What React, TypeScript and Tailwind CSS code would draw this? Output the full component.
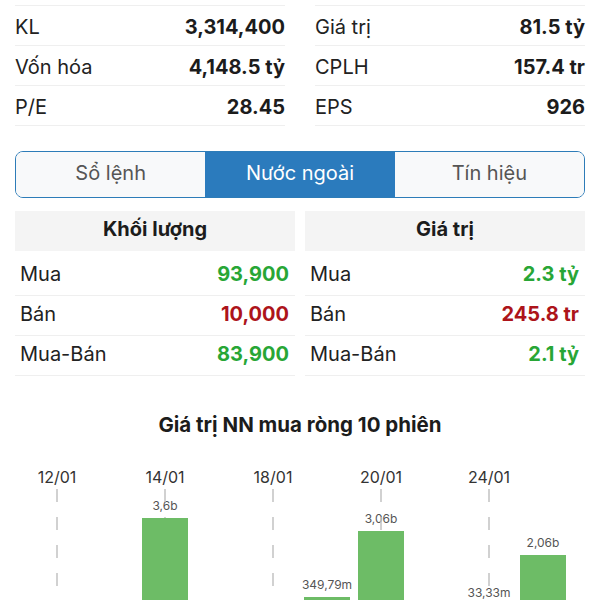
import * as React from "react";

type Stat = { label: string; value: string };

const LEFT_STATS: Stat[] = [
  { label: "KL", value: "3,314,400" },
  { label: "Vốn hóa", value: "4,148.5 tỷ" },
  { label: "P/E", value: "28.45" },
];

const RIGHT_STATS: Stat[] = [
  { label: "Giá trị", value: "81.5 tỷ" },
  { label: "CPLH", value: "157.4 tr" },
  { label: "EPS", value: "926" },
];

type Flow = { label: string; value: string; tone: "up" | "down" };

const VOLUME: Flow[] = [
  { label: "Mua", value: "93,900", tone: "up" },
  { label: "Bán", value: "10,000", tone: "down" },
  { label: "Mua-Bán", value: "83,900", tone: "up" },
];

const VALUE: Flow[] = [
  { label: "Mua", value: "2.3 tỷ", tone: "up" },
  { label: "Bán", value: "245.8 tr", tone: "down" },
  { label: "Mua-Bán", value: "2.1 tỷ", tone: "up" },
];

const TABS = ["Sổ lệnh", "Nước ngoài", "Tín hiệu"];

// chart: 10 sessions, 54px apart, date label every other session
const DATES = [
  { x: 57, label: "12/01" },
  { x: 165, label: "14/01" },
  { x: 273, label: "18/01" },
  { x: 381, label: "20/01" },
  { x: 489, label: "24/01" },
];

const BARS = [
  { x: 165, top: 67, label: "3,6b" },
  { x: 327, top: 146, label: "349,79m" },
  { x: 381, top: 80, label: "3,06b" },
  { x: 489, top: 154, label: "33,33m" },
  { x: 543, top: 104, label: "2,06b" },
];

function StatColumn({ rows }: { rows: Stat[] }) {
  return (
    <div className="border-t border-[#efefef]">
      {rows.map((r) => (
        <div
          key={r.label}
          className="flex h-10 items-center justify-between border-b border-[#efefef] pt-[2px]"
        >
          <span className="text-[20px] text-[#222]">{r.label}</span>
          <span className="text-[20px] font-bold text-[#1c1c1c]">{r.value}</span>
        </div>
      ))}
    </div>
  );
}

function FlowTable({ title, rows }: { title: string; rows: Flow[] }) {
  return (
    <div>
      <div className="flex h-10 items-center justify-center bg-[#f4f4f4] pb-[4px] text-[20px] font-bold text-[#1c1c1c]">
        {title}
      </div>
      <div className="mt-[5px]">
        {rows.map((r) => (
          <div
            key={r.label}
            className="flex h-10 items-center justify-between border-b border-[#efefef] pb-[4px] pl-[5px] pr-[6px]"
          >
            <span className="text-[20px] text-[#222]">{r.label}</span>
            <span
              className={
                r.tone === "up"
                  ? "text-[20px] font-bold text-[#28a636]"
                  : "text-[20px] font-bold text-[#ad141a]"
              }
            >
              {r.value}
            </span>
          </div>
        ))}
      </div>
    </div>
  );
}

function NetBuyChart() {
  return (
    <svg width={600} height={160} className="block">
      {DATES.map((d) => (
        <text
          key={d.label}
          x={d.x}
          y={32}
          textAnchor="middle"
          fontSize={16}
          fill="#333"
          fontFamily="Inter, sans-serif"
        >
          {d.label}
        </text>
      ))}
      {BARS.map((b) => (
        <text
          key={b.label}
          x={b.x}
          y={b.top - 8}
          textAnchor="middle"
          fontSize={12}
          fill="#555"
          fontFamily="Inter, sans-serif"
        >
          {b.label}
        </text>
      ))}
      {DATES.map((d) => (
        <line
          key={d.label}
          x1={d.x}
          x2={d.x}
          y1={38}
          y2={160}
          stroke="#c2c2c2"
          strokeWidth={1.5}
          strokeDasharray="13 15"
        />
      ))}
      {BARS.map((b) => (
        <rect key={b.label} x={b.x - 23} y={b.top} width={46} height={160 - b.top} fill="#6dbc66" />
      ))}
    </svg>
  );
}

export default function App() {
  return (
    <div className="min-h-[600px] w-[600px] bg-white font-['Inter',sans-serif]">
      <div className="px-[15px] pt-[5px]">
        <div className="grid grid-cols-2 gap-[30px]">
          <StatColumn rows={LEFT_STATS} />
          <StatColumn rows={RIGHT_STATS} />
        </div>

        <div className="mt-[25px] flex h-[47px] overflow-hidden rounded-[8px] border-[1.5px] border-[#2d7cb8]">
          {TABS.map((t, i) => (
            <div
              key={t}
              className={
                i === 1
                  ? "flex flex-1 items-center justify-center bg-[#2b7bbd] pb-[3px] text-[20px] text-white"
                  : "flex flex-1 items-center justify-center bg-[#f8f9fa] pb-[3px] text-[20px] text-[#555]"
              }
            >
              {t}
            </div>
          ))}
        </div>

        <div className="mt-[13px] grid grid-cols-2 gap-[10px]">
          <FlowTable title="Khối lượng" rows={VOLUME} />
          <FlowTable title="Giá trị" rows={VALUE} />
        </div>
      </div>

      <div className="mt-[37px] text-center text-[20.5px] font-bold leading-6 text-[#1c1c1c]">
        Giá trị NN mua ròng 10 phiên
      </div>
      <div className="mt-[14px]">
        <NetBuyChart />
      </div>
    </div>
  );
}
